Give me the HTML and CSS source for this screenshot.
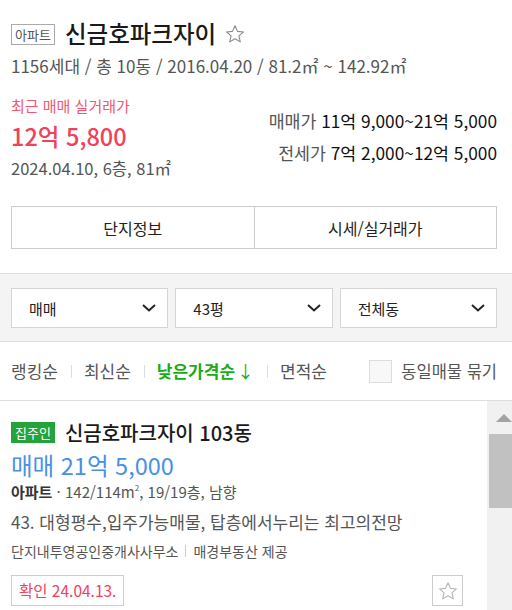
FILE: index.html
```html
<!DOCTYPE html>
<html lang="ko">
<head>
<meta charset="utf-8">
<link rel="stylesheet" href="styles.css">
</head>
<body>
<div class="page">
  <section class="summary">
    <div class="title-row">
      <span class="type-badge">아파트</span>
      <h1 class="title">신금호파크자이</h1>
      <svg class="title-star" width="20" height="20" viewBox="0 0 20 20"><path d="M10 1.8l2.45 5.6 6.05.55-4.6 4 1.38 5.95L10 14.8l-5.28 3.1 1.38-5.95-4.6-4 6.05-.55z" fill="none" stroke="#8a8a8a" stroke-width="1.1" stroke-linejoin="round"/></svg>
    </div>
    <div class="meta">1156세대 / 총 10동 / 2016.04.20 / 81.2㎡ ~ 142.92㎡</div>

    <div class="price-block">
      <div class="recent">
        <div class="recent-label">최근 매매 실거래가</div>
        <div class="recent-price">12억 5,800</div>
        <div class="recent-date">2024.04.10, 6층, 81㎡</div>
      </div>
      <div class="ranges">
        <div class="range"><span class="range-label">매매가</span> <span class="range-value">11억 9,000~21억 5,000</span></div>
        <div class="range"><span class="range-label">전세가</span> <span class="range-value">7억 2,000~12억 5,000</span></div>
      </div>
    </div>

    <div class="tabs">
      <div class="tab">단지정보</div>
      <div class="tab">시세/실거래가</div>
    </div>
  </section>

  <section class="filters">
    <div class="select"><span>매매</span><svg width="14" height="8" viewBox="0 0 14 8"><path d="M1 1l6 5.5L13 1" fill="none" stroke="#222" stroke-width="2"/></svg></div>
    <div class="select"><span>43평</span><svg width="14" height="8" viewBox="0 0 14 8"><path d="M1 1l6 5.5L13 1" fill="none" stroke="#222" stroke-width="2"/></svg></div>
    <div class="select"><span>전체동</span><svg width="14" height="8" viewBox="0 0 14 8"><path d="M1 1l6 5.5L13 1" fill="none" stroke="#222" stroke-width="2"/></svg></div>
  </section>

  <section class="sortbar">
    <div class="sorts">
      <span class="sort">랭킹순</span>
      <span class="bar"></span>
      <span class="sort">최신순</span>
      <span class="bar"></span>
      <span class="sort active">낮은가격순<span class="arrow">↓</span></span>
      <span class="bar"></span>
      <span class="sort">면적순</span>
    </div>
    <label class="group">
      <span class="checkbox"></span>
      <span class="group-label">동일매물 묶기</span>
    </label>
  </section>

  <section class="list">
    <div class="items">
      <article class="item">
        <div class="item-head">
          <span class="owner-badge">집주인</span>
          <span class="item-title">신금호파크자이 103동</span>
        </div>
        <div class="item-price">매매 21억 5,000</div>
        <div class="item-spec"><b>아파트</b> · 142/114m<sup>2</sup>, 19/19층, 남향</div>
        <div class="item-desc">43. 대형평수,입주가능매물, 탑층에서누리는 최고의전망</div>
        <div class="item-agent">단지내투영공인중개사사무소<span class="vbar"></span>매경부동산 제공</div>
        <div class="item-foot">
          <span class="confirm">확인 24.04.13.</span>
          <span class="fav"><svg width="20" height="20" viewBox="0 0 20 20"><path d="M10 1.8l2.45 5.6 6.05.55-4.6 4 1.38 5.95L10 14.8l-5.28 3.1 1.38-5.95-4.6-4 6.05-.55z" fill="none" stroke="#b5b5b5" stroke-width="1.1" stroke-linejoin="round"/></svg></span>
        </div>
      </article>
    </div>
    <div class="scrollbar">
      <div class="scroll-up"></div>
      <div class="scroll-thumb"></div>
    </div>
  </section>
</div>
</body>
</html>
```

FILE: styles.css
```css
* { box-sizing: border-box; }
html, body { margin: 0; padding: 0; background: #fff; }
body {
  font-family: "Noto Sans CJK KR", "Noto Sans", sans-serif;
  color: #222;
  width: 512px;
  height: 610px;
  overflow: hidden;
}

.summary {
  padding: 20px 15px 24px 11px;
  border-bottom: 1px solid #ddd;
}

.title-row {
  display: flex;
  align-items: center;
  height: 26px;
}
.type-badge {
  display: inline-block;
  height: 21px;
  line-height: 19px;
  padding: 0 3px;
  border: 1px solid #aaa;
  font-size: 13px;
  color: #555;
  margin-top: 2px;
}
.title {
  margin: 0 0 0 10px;
  font-size: 23.5px;
  font-weight: 500;
  line-height: 26px;
  color: #1a1a1a;
}
.title-star { margin-left: 9px; margin-top: 2px; }

.meta {
  margin-top: 10px;
  font-size: 17px;
  line-height: 20px;
  color: #555;
}

.price-block {
  display: flex;
  justify-content: space-between;
  margin-top: 20px;
}
.recent-label {
  font-size: 15px;
  line-height: 20px;
  color: #f2576f;
}
.recent-price {
  margin-top: 4px;
  font-size: 23.5px;
  line-height: 32px;
  font-weight: 500;
  color: #f0435a;
}
.recent-date {
  margin-top: 6px;
  font-size: 16.5px;
  line-height: 20px;
  color: #555;
}
.ranges {
  margin-top: 15px;
  text-align: right;
}
.range {
  font-size: 17.3px;
  line-height: 20px;
  margin-bottom: 12px;
}
.range-label { color: #555; }
.range-value { color: #111; }

.tabs {
  display: flex;
  margin-top: 28px;
  height: 43px;
  border: 1px solid #ccc;
}
.tab {
  flex: 1;
  display: flex;
  align-items: center;
  justify-content: center;
  font-size: 16px;
  color: #222;
}
.tab + .tab { border-left: 1px solid #ccc; }

.filters {
  background: #f4f4f4;
  padding: 14px 15px 13px 11px;
  display: grid;
  grid-template-columns: 1fr 1fr 1fr;
  gap: 7px;
  border-bottom: 1px solid #ddd;
}
.select {
  height: 40px;
  background: #fff;
  border: 1px solid #d5d5d5;
  display: flex;
  align-items: center;
  justify-content: space-between;
  padding: 0 11px 0 17px;
  font-size: 15px;
  color: #222;
}

.sortbar {
  height: 59px;
  border-bottom: 1px solid #ddd;
  display: flex;
  align-items: center;
  justify-content: space-between;
  padding: 0 15px 0 11px;
}
.sorts { display: flex; align-items: center; }
.sort {
  font-size: 17px;
  color: #555;
  line-height: 22px;
}
.sort.active {
  color: #19ac19;
  font-weight: 700;
}
.sort .arrow { font-weight: 400; margin-left: 2px; }
.bar {
  width: 1px;
  height: 13px;
  background: #ddd;
  margin: 0 12px 0 13px;
}
.group { display: flex; align-items: center; }
.checkbox {
  width: 23px;
  height: 23px;
  border: 1px solid #ddd;
  background: #f8f8f8;
  margin-right: 9px;
}
.group-label {
  font-size: 16.5px;
  color: #555;
}

.list {
  display: flex;
  height: 210px;
}
.items {
  flex: 1;
  padding: 20px 24px 0 11px;
}
.item-head {
  display: flex;
  align-items: center;
  height: 22px;
}
.owner-badge {
  display: inline-block;
  background: #24a33a;
  color: #fff;
  font-size: 13px;
  line-height: 21px;
  height: 21px;
  padding: 0 4px;
}
.item-title {
  margin-left: 10px;
  font-size: 20px;
  font-weight: 500;
  color: #1a1a1a;
}
.item-price {
  margin-top: 9px;
  font-size: 23.5px;
  line-height: 26px;
  color: #4a8fe6;
}
.item-spec {
  margin-top: 3px;
  font-size: 15px;
  line-height: 22px;
  color: #555;
}
.item-spec b { color: #333; font-weight: 700; }
.item-spec sup { font-size: 8px; vertical-align: 7px; line-height: 0; }
.item-desc {
  margin-top: 8px;
  font-size: 17px;
  line-height: 22px;
  color: #555;
}
.item-agent {
  margin-top: 7px;
  font-size: 14px;
  line-height: 22px;
  color: #555;
  display: flex;
  align-items: center;
}
.vbar {
  display: inline-block;
  width: 1px;
  height: 12px;
  background: #ccc;
  margin: 0 7px;
}
.item-foot {
  margin-top: 13px;
  display: flex;
  justify-content: space-between;
  align-items: center;
}
.confirm {
  height: 31px;
  line-height: 29px;
  padding: 0 7px 0 7px;
  border: 1px solid #f5bcc6;
  color: #f0435a;
  font-size: 15.5px;
}
.fav {
  width: 31px;
  height: 31px;
  border: 1px solid #ccc;
  display: flex;
  align-items: center;
  justify-content: center;
}

.scrollbar {
  width: 25px;
  background: #f1f1f1;
  display: flex;
  flex-direction: column;
  align-items: flex-end;
}
.scroll-up {
  width: 0;
  height: 0;
  margin: 13px 0 12px 0;
  border-left: 8px solid transparent;
  border-right: 8px solid transparent;
  border-bottom: 8px solid #a3a3a3;
}
.scroll-thumb {
  width: 23px;
  height: 74px;
  background: #c1c1c1;
}
```
